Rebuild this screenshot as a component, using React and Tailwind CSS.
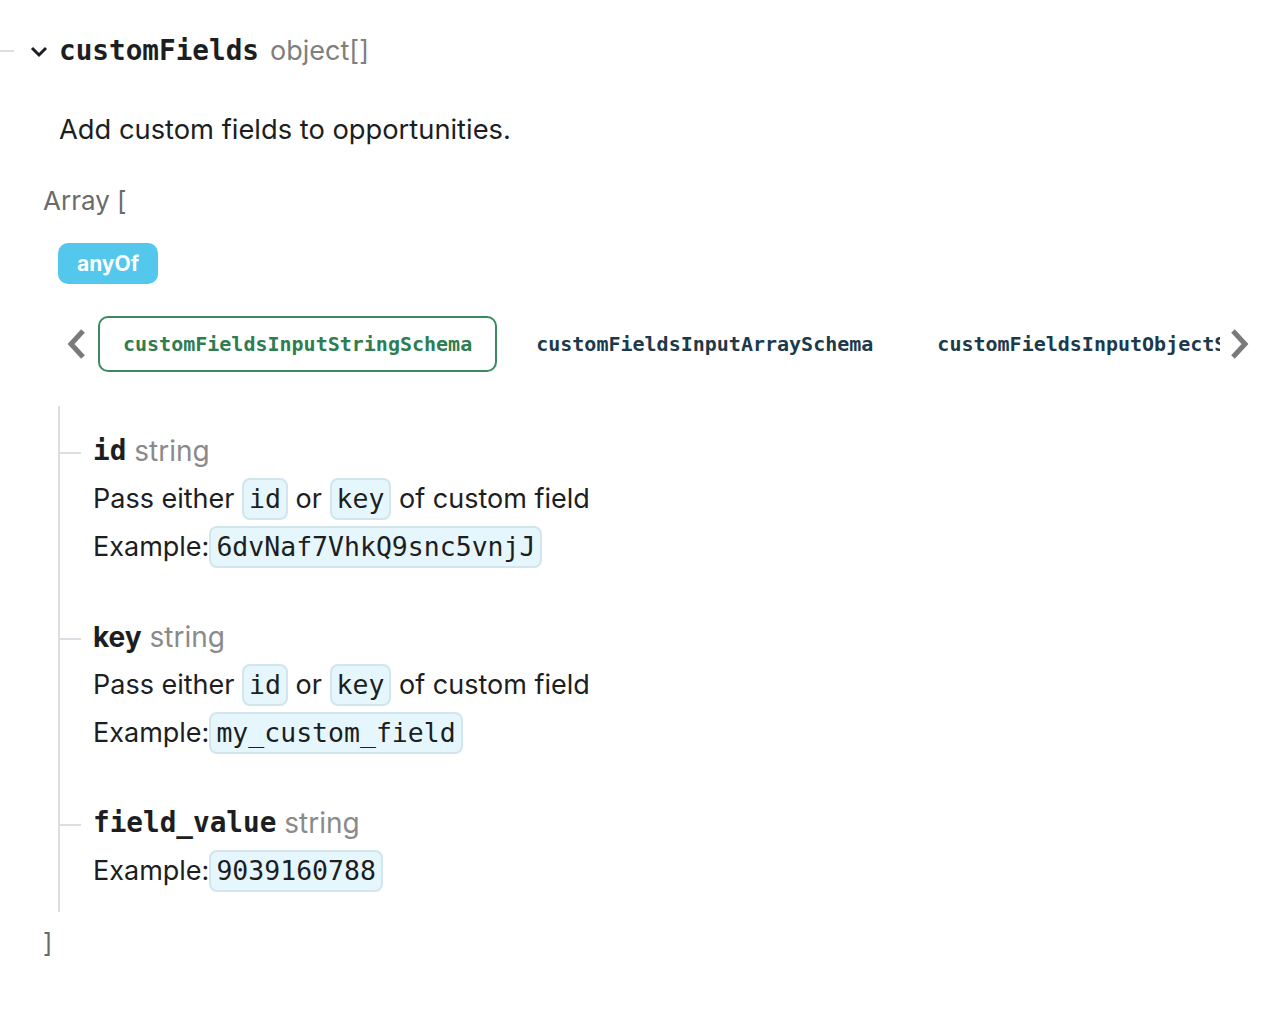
import React from "react";

const mono = { fontFamily: '"DejaVu Sans Mono", "Liberation Mono", monospace' };

function Chip({ children }) {
  return (
    <code
      className="inline-flex items-center h-[42px] px-[5px] rounded-[8px] border-2 border-[#d2e5ec] bg-[#e6f6fd] text-[26.5px] text-[#1c1e21] leading-none"
      style={mono}
    >
      {children}
    </code>
  );
}

function Row({ children }) {
  return <div className="h-[48px] flex items-center whitespace-pre">{children}</div>;
}

function Prop({ name, nameMono = true, desc, example }) {
  return (
    <div className="relative">
      <div className="absolute left-[-34px] top-[25px] w-[22px] h-[2px] bg-[#dadde1]" />
      <Row>
        <span
          className={nameMono ? "text-[27.7px] font-bold text-[#1c1e21]" : "text-[28px] font-bold text-[#1c1e21]"}
          style={nameMono ? mono : undefined}
        >
          {name}
        </span>
        <span className="text-[28px] text-[#8a8a8a]"> string</span>
      </Row>
      {desc && (
        <Row>
          <span>Pass either </span>
          <Chip>id</Chip>
          <span> or </span>
          <Chip>key</Chip>
          <span> of custom field</span>
        </Row>
      )}
      <Row>
        <span>Example:</span>
        <Chip>{example}</Chip>
      </Row>
    </div>
  );
}

function Chevron({ dir }) {
  return (
    <svg width="22" height="32" viewBox="0 0 22 32" className="shrink-0">
      <polyline
        points={dir === "left" ? "17,3 5,16 17,29" : "5,3 17,16 5,29"}
        fill="none"
        stroke="#7a7a7a"
        strokeWidth="5"
      />
    </svg>
  );
}

export default function App() {
  return (
    <div
      className="w-[1280px] h-[1010px] bg-white text-[#1c1e21] overflow-hidden"
      style={{ fontFamily: 'Inter, "Noto Sans", sans-serif' }}
    >
      {/* Header */}
      <div className="flex items-center h-[40px] mt-[31px]">
        <div className="w-[14px] h-[2px] bg-[#dadde1]" />
        <svg width="20" height="14" viewBox="0 0 20 14" className="ml-[15px]">
          <polyline points="3,4 10,11 17,4" fill="none" stroke="#1c1e21" strokeWidth="3" />
        </svg>
        <span className="ml-[10px] text-[27.7px] font-bold" style={mono}>
          customFields
        </span>
        <span className="ml-[11px] text-[27px] text-[#7f7f7f]">object[]</span>
      </div>

      {/* Description */}
      <div className="pl-[59px] mt-[39px] h-[40px] flex items-center text-[27.3px]">
        Add custom fields to opportunities.
      </div>

      {/* Array [ */}
      <div className="pl-[43px] mt-[30px] h-[40px] flex items-center text-[26px] text-[#6b6b6b]">
        Array [
      </div>

      {/* anyOf pill */}
      <div className="pl-[58px] mt-[23px]">
        <span className="inline-flex items-center justify-center w-[100px] h-[41px] rounded-[10px] bg-[#54c7ec] text-white text-[21px] font-bold">
          anyOf
        </span>
      </div>

      {/* Tabs */}
      <div className="flex items-center mt-[32px] pl-[66px]">
        <Chevron dir="left" />
        <div className="ml-[10px] w-[1122px] overflow-hidden">
          <div className="flex gap-[14px] whitespace-nowrap">
            <div
              className="h-[56px] flex items-center px-[23px] rounded-[10px] border-2 border-[#3a8a5c] text-[#2e7d52] text-[20px] font-bold"
              style={mono}
            >
              customFieldsInputStringSchema
            </div>
            <div
              className="h-[56px] flex items-center px-[23px] border-2 border-transparent text-[#1c3a4a] text-[20px] font-bold"
              style={mono}
            >
              customFieldsInputArraySchema
            </div>
            <div
              className="h-[56px] flex items-center px-[23px] border-2 border-transparent text-[#1c3a4a] text-[20px] font-bold"
              style={mono}
            >
              customFieldsInputObjectSchema
            </div>
          </div>
        </div>
        <div className="ml-[8px]">
          <Chevron dir="right" />
        </div>
      </div>

      {/* Nested properties */}
      <div className="ml-[58px] mt-[34px] border-l-2 border-[#dadde1] pl-[33px] pt-[21px] pb-[17px] text-[27px] flex flex-col gap-[42px]">
        <Prop name="id" desc example="6dvNaf7VhkQ9snc5vnjJ" />
        <Prop name="key" nameMono={false} desc example="my_custom_field" />
        <Prop name="field_value" example="9039160788" />
      </div>

      {/* ] */}
      <div className="pl-[43px] mt-[10px] h-[40px] flex items-center text-[26px] text-[#6b6b6b]">
        ]
      </div>
    </div>
  );
}
